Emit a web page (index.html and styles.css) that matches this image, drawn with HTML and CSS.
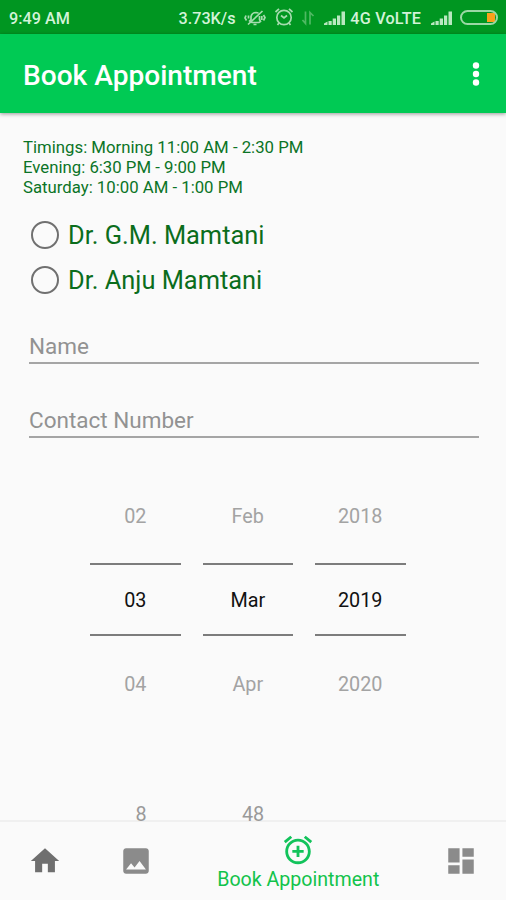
FILE: index.html
```
<!DOCTYPE html>
<html>
<head>
<meta charset="utf-8">
<title>Book Appointment</title>
<link rel="stylesheet" href="styles.css">
</head>
<body>
<div class="screen">
  <div class="status">
    <span class="clock">9:49 AM</span>
    <span class="speed">3.73K/s</span>
    <svg class="mute" width="22" height="18" viewBox="0 0 22 18">
      <path d="M5 12.500L7 10.500V7.500Q8 3.500 12 3.500L14.500 4M7.500 13.500H15L16.500 12.500L15.500 10.500V7M9.500 15.500H12.500M4 15.500L18.500 2M2 6.500L1 9L2.500 11.500M19.500 6L21 8.500L19.500 11.500M4.500 6.500V9.500M17.800 7V11"/>
    </svg>
    <svg class="clock-icon" width="20" height="20" viewBox="0 0 20 20">
      <circle cx="10" cy="10.500" r="7.200"/>
      <path d="M7 8.500L10 11L13 8.500M1.500 5L5 1.800M18.500 5L15 1.800M5 16L3.500 18M15 16L16.500 18"/>
    </svg>
    <svg class="data" width="14" height="16" viewBox="0 0 14 16">
      <path d="M4.500 1.500V13.500L1.500 10M9 14.500V2.500L12.500 6"/>
    </svg>
    <svg class="signal first" width="22" height="16" viewBox="0 0 22 16">
      <path d="M0 15V13.500L3.500 11.500V15zM4.500 11H7.700V15H4.500zM8.700 8.500H12V15H8.700zM13 5.500H16.200V15H13zM17.500 1.500H21V15H17.500z"/>
    </svg>
    <span class="network">4G VoLTE</span>
    <svg class="signal second" width="22" height="16" viewBox="0 0 22 16">
      <path d="M0 15V13.500L3.500 11.500V15zM4.500 11H7.700V15H4.500zM8.700 8.500H12V15H8.700zM13 5.500H16.200V15H13zM17.500 1.500H21V15H17.500z"/>
    </svg>
    <span class="battery"></span>
  </div>

  <div class="toolbar">
    <h1>Book Appointment</h1>
    <svg width="8" height="26" viewBox="0 0 8 26" fill="#fff">
      <circle cx="4" cy="4.500" r="3.200"/>
      <circle cx="4" cy="13" r="3.200"/>
      <circle cx="4" cy="21.500" r="3.200"/>
    </svg>
  </div>

  <div class="content">
    <p class="timings">
      <span class="morning">Timings: Morning 11:00 AM - 2:30 PM</span><br>
      <span class="evening">Evening: 6:30 PM - 9:00 PM</span><br>
      <span class="saturday">Saturday: 10:00 AM - 1:00 PM</span>
    </p>
    <div class="doctors">
      <div class="radio"><i></i><span>Dr. G.M. Mamtani</span></div>
      <div class="radio"><i></i><span>Dr. Anju Mamtani</span></div>
    </div>
    <div class="field">Name</div>
    <div class="field">Contact Number</div>

    <div class="picker">
      <div class="wheel"><span>02</span><b>03</b><span>04</span></div>
      <div class="wheel"><span>Feb</span><b>Mar</b><span>Apr</span></div>
      <div class="wheel"><span>2018</span><b>2019</b><span>2020</span></div>
    </div>
    <div class="time">
      <span>8</span>
      <span>48</span>
    </div>
  </div>

  <div class="nav">
    <div class="tab">
      <svg width="34" height="34" viewBox="0 0 24 24"><path fill="#6f6f6f" d="M10 20v-6h4v6h5v-8h3L12 3 2 12h3v8z"/></svg>
    </div>
    <div class="tab">
      <svg width="34" height="34" viewBox="0 0 24 24"><path d="M21 19V5c0-1.100-.9-2-2-2H5c-1.100 0-2 .9-2 2v14c0 1.100.9 2 2 2h14c1.100 0 2-.9 2-2zM8.500 13.500l2.500 3.010L14.500 12l4.500 6H5l3.500-4.500z"/></svg>
    </div>
    <div class="tab active">
      <svg width="34" height="34" viewBox="0 0 24 24"><path d="M7.880 3.390L6.600 1.860 2 5.710l1.290 1.530 4.590-3.850zM22 5.720l-4.600-3.860-1.290 1.530 4.600 3.860L22 5.720zM12 4c-4.970 0-9 4.030-9 9s4.020 9 9 9c4.970 0 9-4.030 9-9s-4.030-9-9-9zm0 16c-3.870 0-7-3.130-7-7s3.130-7 7-7 7 3.130 7 7-3.130 7-7 7zm1-11h-2v3H8v2h3v3h2v-3h3v-2h-3V9z"/></svg>
      <span>Book Appointment</span>
    </div>
    <div class="tab">
      <svg width="34" height="34" viewBox="0 0 24 24"><path d="M3 13h8V3H3v10zm0 8h8v-6H3v6zm10 0h8V11h-8v10zm0-18v6h8V3h-8z"/></svg>
    </div>
  </div>
</div>
</body>
</html>
```
FILE: styles.css
```
* { box-sizing: border-box; }
body { margin: 0; font-family: Roboto, "Liberation Sans", sans-serif; background: #fafafa; }
h1, p { margin: 0; }
svg { display: block; flex: none; }
.screen { display: flex; flex-direction: column; width: 506px; height: 900px; overflow: hidden; }

.status { display: flex; flex: none; align-items: center; height: 34px; padding: 2px 8px 0 9px; background: #009621; color: #d3f3d8; font-size: 16.2px; font-weight: 500; white-space: nowrap; }
.clock { width: 170px; }
.speed { width: 66px; }
.mute, .clock-icon, .data { fill: none; stroke: #a5dcae; stroke-width: 1.7; }
.clock-icon { margin: -2px 0 0 8px; }
.data { margin-left: 7px; stroke: #4fb963; }
.signal { fill: #b9e8c0; }
.signal.first { margin-left: 9px; }
.network { width: 74px; margin-left: 4px; letter-spacing: .2px; }
.signal.second { margin-left: 7px; }
.battery { width: 38px; height: 15px; margin: -1px 0 0 7px; border: 2px solid #9bd8a5; border-radius: 8px; background: linear-gradient(#f9a11b, #f9a11b) 25px 1px / 8px 9px no-repeat; }

.toolbar { position: relative; display: flex; flex: none; align-items: center; justify-content: space-between; height: 79px; padding: 0 26px 0 23px; background: #00ca54; box-shadow: 0 1px 4px rgba(0, 0, 0, .4); }
.toolbar h1 { margin-top: 4px; color: #fff; font-size: 28.1px; line-height: 34px; font-weight: 500; }

.content { position: relative; z-index: 1; flex: 1; min-height: 0; padding: 25px 0 0 23px; }
.timings { color: #0b7426; font-size: 16.75px; line-height: 19.8px; white-space: nowrap; }
.doctors { margin-top: 15px; }
.radio { display: flex; align-items: center; height: 45px; color: #0b6d1c; font-size: 25.4px; }
.radio i { width: 28px; height: 28px; margin: 0 9px 0 8px; border: 2.500px solid #707070; border-radius: 50%; }
.radio span { padding-top: 1px; }
.field { width: 450px; height: 37px; margin: 25px 0 37px 6px; border-bottom: 2px solid #a5a5a5; color: #929292; font-size: 22.5px; line-height: 39px; }
.field + .field { margin-top: 0; }

.picker { display: flex; gap: 22px; margin: 67px 0 0 67px; }
.wheel { display: flex; flex-direction: column; width: 90.5px; color: #a3a3a3; font-size: 19.8px; line-height: 24px; text-align: center; }
.wheel b { height: 73px; margin: 34px 0 37px; border: solid #7c7c7c; border-width: 2px 0; color: #111; font-weight: 400; line-height: 72px; }
.time { display: flex; margin: 106px 0 0 62px; color: #999; font-size: 19.8px; line-height: 24px; text-align: center; }
.time span { width: 112px; }

.nav { display: flex; flex: none; height: 80px; border-top: 2px solid #f0f0f0; background: #fafafa; }
.tab { display: flex; flex: 0 0 90.5px; flex-direction: column; align-items: center; padding-top: 22px; fill: #8b8b8b; }
.tab.active { flex: 1; padding-top: 11px; color: #12c34b; font-size: 19.6px; line-height: 26px; fill: #12c35b; }
```
